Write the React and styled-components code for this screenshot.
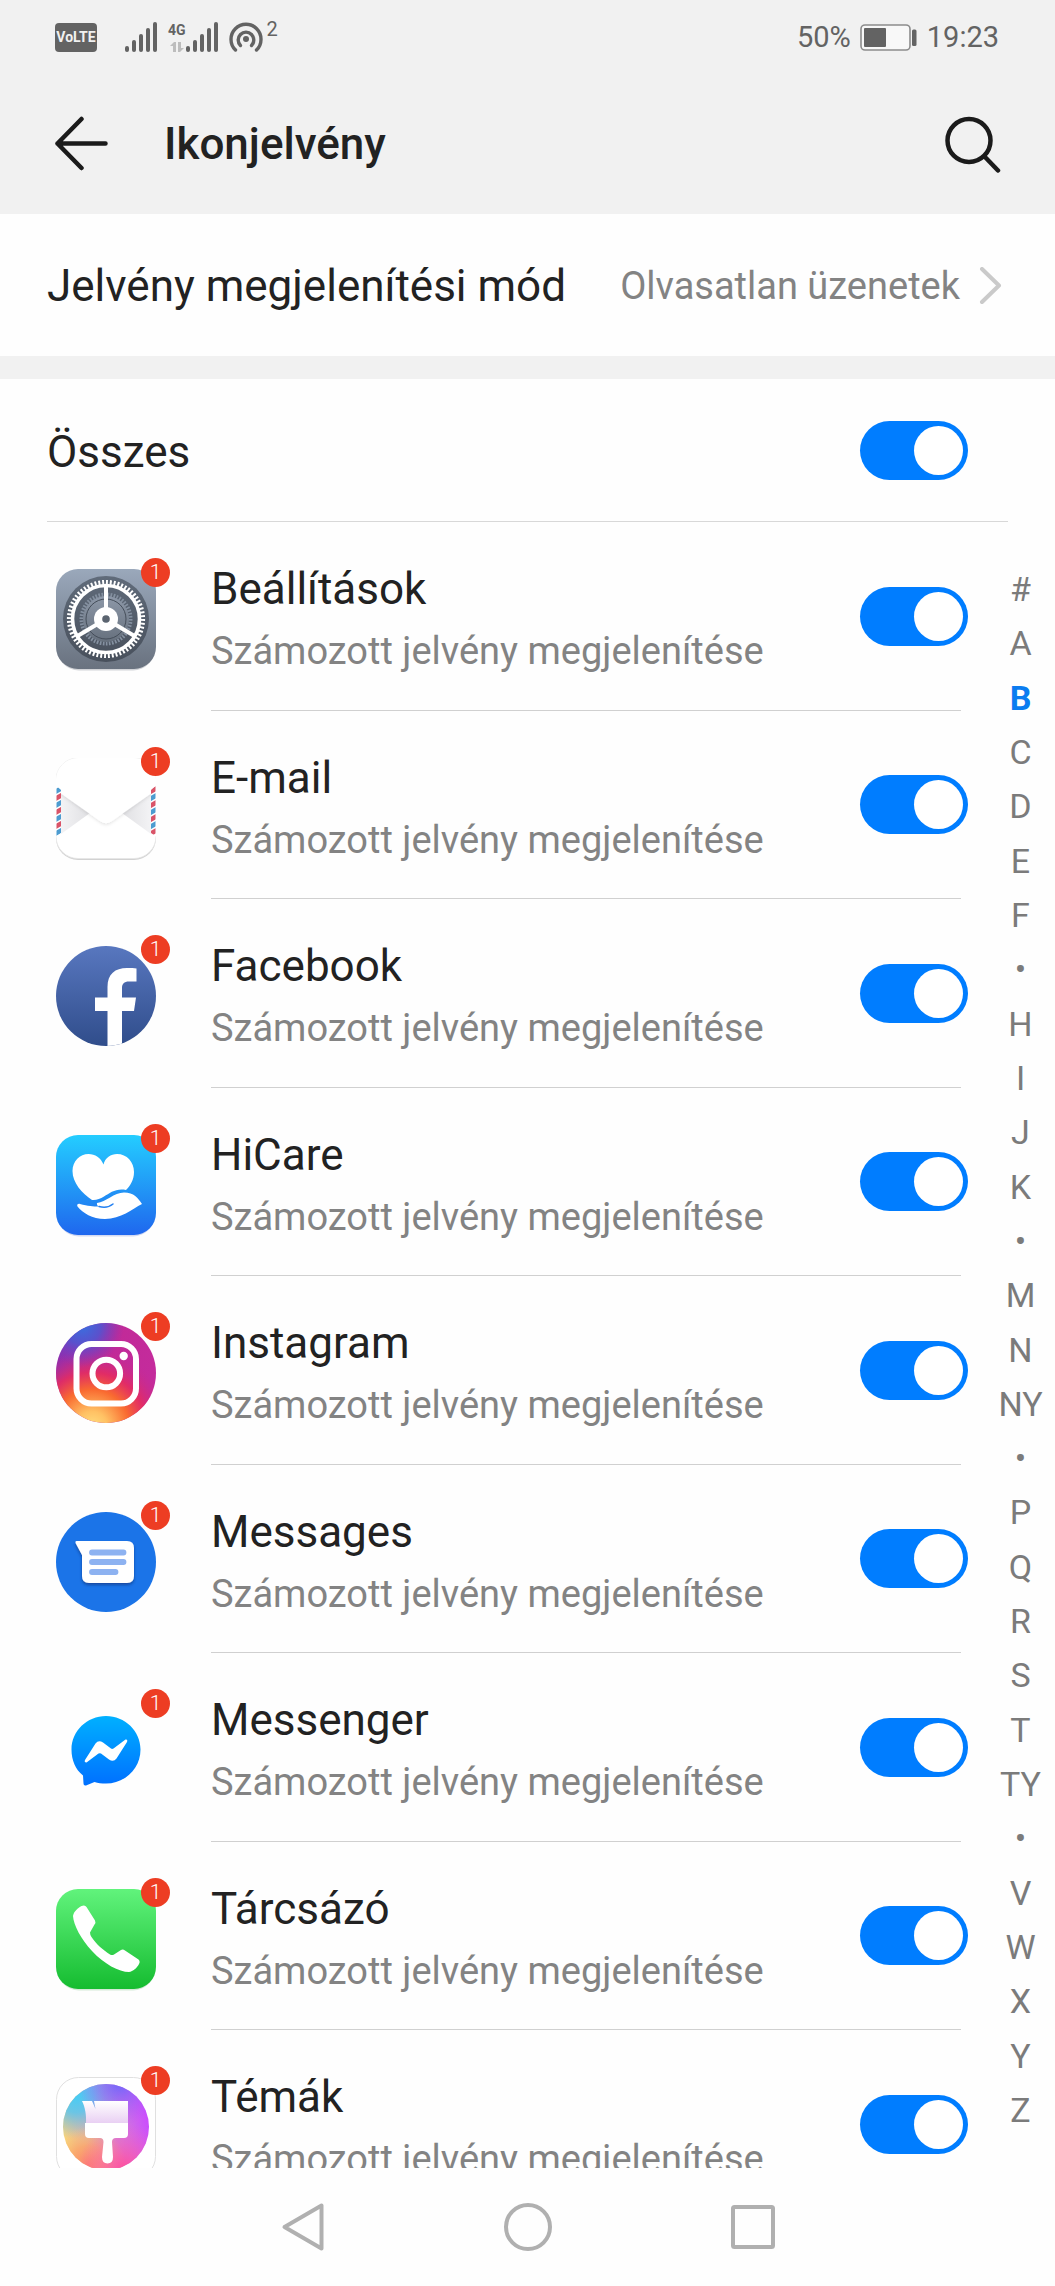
import React, { useState } from "react";
import styled, { createGlobalStyle } from "styled-components";

const GlobalStyle = createGlobalStyle`
  * { box-sizing: border-box; }
  body {
    margin: 0;
    background: #fefefe;
    color: #222;
    font-family: Roboto, "Noto Sans", sans-serif;
  }
  button { font: inherit; color: inherit; border: 0; padding: 0; background: none; cursor: pointer; }
`;

const Screen = styled.div`
  height: 100vh;
  display: flex;
  flex-direction: column;
  overflow: hidden;
`;

const Top = styled.header`
  flex: none;
  background: #f1f1f1;
`;

const StatusBar = styled.div`
  height: 74px;
  padding: 0 56px 0 55px;
  display: flex;
  justify-content: space-between;
  align-items: center;
  color: #636363;
`;

const StatusGroup = styled.div`
  display: flex;
  align-items: center;
  gap: ${(p) => p.$gap}px;
`;

const StatusText = styled.span`
  font-size: 29px;
  line-height: 40px;
`;

const VolteTag = styled.span`
  width: 42px;
  height: 29px;
  margin-right: 17px;
  border-radius: 4px;
  background: #636363;
  color: #f1f1f1;
  font-size: 14px;
  font-weight: 700;
  line-height: 29px;
  text-align: center;
`;

const NetworkType = styled.div`
  display: flex;
  flex-direction: column;
  align-items: center;
  gap: 4px;
  font-size: 14px;
  font-weight: 700;
  line-height: 16px;
`;

const Superscript = styled.span`
  align-self: flex-start;
  font-size: 20px;
  line-height: 14px;
`;

const AppBar = styled.div`
  height: 140px;
  padding: 0 53px;
  display: flex;
  align-items: center;
`;

const Title = styled.h1`
  flex: 1;
  margin: 0 0 0 55px;
  font-size: 44px;
  font-weight: 500;
  line-height: 56px;
`;

const IconButton = styled.button`
  display: flex;
`;

const ModeRow = styled.button`
  flex: none;
  height: 142px;
  padding: 2px 53px 0 47px;
  display: flex;
  align-items: center;
  justify-content: space-between;
  text-align: left;
`;

const Label = styled.label`
  font-size: 44px;
  line-height: 50px;
`;

const ModeValue = styled.span`
  display: flex;
  align-items: center;
  gap: 18px;
`;

const Secondary = styled.span`
  color: #838383;
  font-size: 38px;
  line-height: 46px;
`;

const Band = styled.div`
  flex: none;
  height: 23px;
  background: #f1f1f1;
`;

const AllRow = styled.div`
  flex: none;
  height: 143px;
  margin: 0 47px;
  padding-right: 40px;
  border-bottom: 1px solid #d8d8d8;
  display: flex;
  align-items: center;
  justify-content: space-between;

  ${Label} { padding-top: 4px; }
`;

const Switch = styled.input`
  appearance: none;
  flex: none;
  width: 108px;
  height: 59px;
  margin: 0;
  padding: 5px;
  border-radius: 30px;
  background: ${(p) => (p.checked ? "#007dff" : "#c8c8c8")};
  display: flex;
  justify-content: ${(p) => (p.checked ? "flex-end" : "flex-start")};
  cursor: pointer;

  &::before {
    content: "";
    width: 49px;
    height: 49px;
    border-radius: 50%;
    background: #fff;
  }
`;

const Content = styled.main`
  flex: 1;
  min-height: 0;
  display: flex;
  overflow: hidden;
`;

const AppList = styled.ul`
  flex: 1;
  margin: 0;
  padding: 0 0 0 56px;
  list-style: none;
`;

const AppRow = styled.li`
  height: 189px;
  display: flex;
  gap: 55px;

  &:nth-child(even) { height: 188px; }
`;

const IconBox = styled.div`
  position: relative;
  flex: none;
  width: 100px;
  height: 100px;
  margin-top: 47px;
`;

const Badge = styled.span`
  position: absolute;
  top: -11px;
  right: -14px;
  width: 29px;
  height: 29px;
  border-radius: 50%;
  background: #ed3d23;
  color: #fff;
  font-size: 21px;
  font-weight: 300;
  line-height: 29px;
  text-align: center;
`;

const RowBody = styled.div`
  flex: 1;
  margin-right: 7px;
  border-bottom: 1px solid #d0d0d0;
  display: flex;
  align-items: center;
  justify-content: space-between;

  ${Switch} { margin-right: -7px; }
`;

const Texts = styled.div`
  padding-top: 6px;
  display: flex;
  flex-direction: column;
  gap: 14px;
`;

const IndexBar = styled.nav`
  flex: none;
  width: 87px;
  padding: 40px 0 31px 18px;
  display: flex;
  flex-direction: column;
`;

const IndexLink = styled.a`
  flex: 1;
  display: flex;
  align-items: center;
  justify-content: center;
  color: ${(p) => (p.$active ? "#0a7cf0" : "#7b7b7b")};
  font-size: 34px;
  font-weight: ${(p) => (p.$active ? 700 : 400)};
  line-height: 40px;
  text-decoration: none;
`;

const NavBar = styled.footer`
  flex: none;
  height: 118px;
  display: flex;
  justify-content: center;
`;

const NavButton = styled.button`
  width: 225px;
  display: flex;
  align-items: center;
  justify-content: center;
`;

const Signal = () => (
  <svg width="32" height="30" viewBox="0 0 32 30" fill="#636363" aria-hidden="true">
    {[0, 1, 2, 3, 4].map((i) => (
      <rect key={i} x={i * 7} y={24 - i * 6} width="4" height={6 + i * 6} rx="2" />
    ))}
  </svg>
);

const DataArrows = () => (
  <svg width="14" height="10" viewBox="0 0 14 10" fill="#bdbdbd" aria-hidden="true">
    <path d="M0 4L4 0h2v10H3V4zM8 0h3v6h3l-4 4H8z" />
  </svg>
);

const Hotspot = () => (
  <svg width="34" height="30" viewBox="0 0 34 30" fill="none" stroke="#636363" strokeWidth="3.4" strokeLinecap="round" aria-hidden="true">
    <path d="M6.500 28A15 15 0 1 1 27.500 28" />
    <path d="M11.500 23.500A7.800 7.800 0 1 1 22.500 23.500" />
    <circle cx="17" cy="17" r="3" fill="#636363" stroke="none" />
  </svg>
);

const Battery = () => (
  <svg width="58" height="27" viewBox="0 0 58 27" aria-hidden="true">
    <rect x="1" y="1" width="49" height="25" rx="4" fill="#f8f8f8" stroke="#8c8c8c" strokeWidth="1.600" />
    <rect x="4" y="4" width="22" height="19" rx="1" fill="#636363" />
    <rect x="52" y="5.500" width="4.500" height="16.500" rx="1.500" fill="#636363" />
  </svg>
);

const BackArrow = () => (
  <svg width="56" height="56" viewBox="0 0 56 56" fill="none" stroke="#1b1b1b" strokeWidth="4.500" strokeLinecap="round" strokeLinejoin="round" aria-hidden="true">
    <path d="M52.500 27.500H4.500M28.500 3L4.500 27.500L28.500 52" />
  </svg>
);

const SearchIcon = () => (
  <svg width="57" height="57" viewBox="0 0 57 57" fill="none" stroke="#1b1b1b" strokeWidth="4.500" strokeLinecap="round" aria-hidden="true">
    <circle cx="24" cy="24.500" r="21.500" />
    <path d="M40 41L53 54.500" />
  </svg>
);

const Chevron = () => (
  <svg width="24" height="38" viewBox="0 0 24 38" fill="none" stroke="#cacaca" strokeWidth="4" strokeLinecap="round" strokeLinejoin="round" aria-hidden="true">
    <path d="M4 2L21 18.500L4 35" />
  </svg>
);

const IconSvg = ({ children }) => (
  <svg width="100" height="104" viewBox="0 0 100 104" aria-hidden="true">{children}</svg>
);

const Gradient = ({ id, from, to }) => (
  <linearGradient id={id} x1="0" y1="0" x2="0" y2="1">
    <stop offset="0" stopColor={from} />
    <stop offset="1" stopColor={to} />
  </linearGradient>
);

const SettingsIcon = () => (
  <IconSvg>
    <defs>
      <Gradient id="setBg" from="#9aa8bb" to="#69727f" />
      <Gradient id="setDial" from="#606b7a" to="#48505c" />
      <Gradient id="setDisc" from="#8d98a8" to="#66707d" />
    </defs>
    <rect x="1" y="3" width="98" height="98.500" rx="22" fill="#d2d4d8" />
    <rect width="100" height="100" rx="22" fill="url(#setBg)" />
    <circle cx="50" cy="50" r="43" fill="url(#setDial)" />
    <circle cx="50" cy="50" r="24.500" fill="none" stroke="#8490a0" strokeWidth="4" pathLength="100" strokeDasharray="1.100 0.900" />
    <circle cx="50" cy="50" r="23" fill="url(#setDisc)" />
    <circle cx="50" cy="50" r="20" fill="none" stroke="#454e5a" strokeWidth="1" />
    <circle cx="50" cy="50" r="33.500" fill="none" stroke="#fff" strokeWidth="3.600" />
    <circle cx="50" cy="50" r="36.700" fill="none" stroke="#fff" strokeWidth="4.800" pathLength="120" strokeDasharray="1 1" />
    <path d="M50 50V17M50 50L21.500 67M50 50L78.500 67" stroke="#fff" strokeWidth="4" />
    <circle cx="50" cy="50" r="12" fill="#fff" />
    <circle cx="50" cy="50" r="3.800" fill="#5b6470" />
  </IconSvg>
);

const EmailIcon = () => (
  <IconSvg>
    <defs>
      <linearGradient id="mailL" x1="0" x2="1"><stop offset="0" stopColor="#f3f3f5" /><stop offset="1" stopColor="#e0e0e3" /></linearGradient>
      <linearGradient id="mailR" x1="1" x2="0"><stop offset="0" stopColor="#f3f3f5" /><stop offset="1" stopColor="#e0e0e3" /></linearGradient>
      <clipPath id="mailStripes"><path d="M0.500 28L5 32V75L0.500 78ZM99.500 28L95 32V75L99.500 78Z" /></clipPath>
      <filter id="mailShade" x="-10%" y="-10%" width="120%" height="130%"><feDropShadow dx="0" dy="1.500" stdDeviation="1.500" floodColor="#000" floodOpacity="0.100" /></filter>
      <clipPath id="mailClip"><rect width="100" height="100.500" rx="22" /></clipPath>
    </defs>
    <rect x="0" y="1" width="100" height="101" rx="22" fill="#d2d2d2" />
    <rect x="0" y="0" width="100" height="100.500" rx="22" fill="#fff" stroke="#e6e6e6" strokeWidth="0.800" />
    <path d="M5 35L34 55L5 76Z" fill="url(#mailL)" />
    <path d="M95 35L66 55L95 76Z" fill="url(#mailR)" />
    <g clipPath="url(#mailClip)">
      <path d="M0 32V-8H100V32L56 63Q50 67.500 44 63Z" fill="#fff" filter="url(#mailShade)" />
    </g>
    <rect x="0" y="30" width="5" height="48" fill="#fff" />
    <rect x="95" y="30" width="5" height="48" fill="#fff" />
    <g clipPath="url(#mailStripes)" strokeWidth="4.500">
      {[0, 1, 2, 3, 4, 5, 6].map((i) => (
        <g key={i} stroke={i % 2 ? "#d95468" : "#4d9cd0"}>
          <path d={`M-1 ${34 + i * 7}L6 ${30 + i * 7}`} />
        </g>
      ))}
      {[0, 1, 2, 3, 4, 5, 6].map((i) => (
        <g key={i} stroke={i % 2 ? "#4d9cd0" : "#d95468"}>
          <path d={`M94 ${34 + i * 7}L101 ${30 + i * 7}`} />
        </g>
      ))}
    </g>
  </IconSvg>
);

const FacebookIcon = () => (
  <IconSvg>
    <defs>
      <Gradient id="fbBg" from="#5877bf" to="#304d8b" />
      <clipPath id="fbClip"><circle cx="50" cy="50" r="50" /></clipPath>
    </defs>
    <g clipPath="url(#fbClip)">
      <rect width="100" height="100" fill="url(#fbBg)" />
      <path d="M51.500 101V65H39V51.500H51.500V41C51.500 28 59 22 71 22C75 22 78 22 80.500 22.500V35.500H73C68 35.500 66 38 66 42V51.500H80L78 65H66V101Z" fill="#fff" />
    </g>
  </IconSvg>
);

const HiCareIcon = () => (
  <IconSvg>
    <defs><Gradient id="careBg" from="#24cdff" to="#1f67ee" /></defs>
    <rect x="1" y="3" width="98" height="98.500" rx="22" fill="#d3daf2" />
    <rect width="100" height="100" rx="22" fill="url(#careBg)" />
    <path d="M47.500 29.500C49 23 55 19 61 19C71 19 78 27 78 37C78 45 74 51 70 55C60 53 54 58 48 61.500C44 64 40 65.500 36 65C26 58 16.500 48 16.500 36C16.500 26 24 19 32.500 19C39 19 45 23 47.500 29.500Z" fill="#fff" />
    <path d="M41 68C50 67 58 57.500 68 57.500C78 57.500 82 63 86 69C76 74 65 84 49 84C36 84 27 78 21.500 71.500C20.500 69.500 22 68.500 24 69C32 71 37 71.500 43 71.500C41.500 71 40.500 69.500 41 68Z" fill="#fff" />
    <path d="M43 71.500C50 73.500 54 71.500 57 69" fill="none" stroke="#2481f2" strokeWidth="1.500" strokeLinecap="round" />
  </IconSvg>
);

const InstagramIcon = () => (
  <IconSvg>
    <defs>
      <linearGradient id="igBase" x1="0" y1="0" x2="1" y2="0.300"><stop offset="0" stopColor="#8030b5" /><stop offset="0.600" stopColor="#c12a98" /><stop offset="1" stopColor="#c42b9c" /></linearGradient>
      <radialGradient id="igBlue" gradientUnits="userSpaceOnUse" cx="26" cy="2" r="42"><stop offset="0" stopColor="#3771e0" /><stop offset="0.450" stopColor="#4c58d4" stopOpacity="0.850" /><stop offset="1" stopColor="#7a38c0" stopOpacity="0" /></radialGradient>
      <radialGradient id="igWarm" gradientUnits="userSpaceOnUse" cx="36" cy="104" r="78"><stop offset="0" stopColor="#ffdf80" /><stop offset="0.200" stopColor="#ffc164" /><stop offset="0.480" stopColor="#f96a30" /><stop offset="0.700" stopColor="#e52c60" stopOpacity="0.900" /><stop offset="1" stopColor="#c42b90" stopOpacity="0" /></radialGradient>
    </defs>
    <circle cx="50" cy="50" r="50" fill="url(#igBase)" />
    <circle cx="50" cy="50" r="50" fill="url(#igWarm)" />
    <circle cx="50" cy="50" r="50" fill="url(#igBlue)" />
    <g fill="none" stroke="#fff" strokeWidth="6">
      <rect x="20.500" y="21" width="59.500" height="59.500" rx="15" />
      <circle cx="50.300" cy="50.500" r="13.800" />
    </g>
    <circle cx="67.700" cy="33" r="4.200" fill="#fff" />
  </IconSvg>
);

const MessagesIcon = () => (
  <IconSvg>
    <defs>
      <filter id="msgShade" x="-20%" y="-20%" width="140%" height="150%"><feDropShadow dx="0" dy="2" stdDeviation="1.500" floodColor="#0a2c70" floodOpacity="0.600" /></filter>
    </defs>
    <circle cx="50" cy="50" r="50" fill="#1b74e8" />
    <path d="M20.500 29H71Q78 29 78 36V64Q78 71 71 71H33Q26 71 26 64V43L19.500 31Q19 29 20.500 29Z" fill="#fff" filter="url(#msgShade)" />
    <path d="M36 40.500H67.500M36 50H67.500M36 60H59.500" stroke="#8db2f1" strokeWidth="5.800" strokeLinecap="round" />
  </IconSvg>
);

const MessengerIcon = () => (
  <IconSvg>
    <defs><Gradient id="mgBg" from="#00b0ff" to="#0070ff" /></defs>
    <path d="M50 16C69 16 84.500 31 84.500 49.500C84.500 68.500 69 83.500 50 83.500C45.500 83.500 42 83 38.500 82L30 85.500Q27.500 86 27.500 83.500L27 75.500C19.500 69.500 15.500 60 15.500 49.500C15.500 31 31 16 50 16Z" fill="url(#mgBg)" />
    <path d="M29 60L39.500 43.500Q42.500 39.500 47 42.500L55 48.500Q56 49.300 57.500 48.500L69.500 39.500Q72 39 71 42L60.500 58.500Q57.500 62.500 53 59.500L45 53.500Q44 53 42.500 53.500L30.500 62.500Q28 62.500 29 60Z" fill="#fff" />
  </IconSvg>
);

const PhoneIcon = () => (
  <IconSvg>
    <defs><Gradient id="phBg" from="#61f37c" to="#15bc30" /></defs>
    <rect x="1" y="3" width="98" height="98.500" rx="22" fill="#d5ead8" />
    <rect width="100" height="100" rx="22" fill="url(#phBg)" />
    <path d="M25.500 17Q29 15.500 30.500 18L39 31.500Q40 33.500 38.500 35.500L34 43.500Q34 46 35.500 48C40 55 47 61 54 65.500Q56 66.500 58 65.500L65 61Q67 60 69 61.500L82.500 70.500Q84.500 72.500 83 75C81 79 77 82.500 73 83C63 83 48 75 36 62C25 50 17.500 36 17 27C18 22 22 19 25.500 17Z" fill="#fff" />
  </IconSvg>
);

const ThemesIcon = () => (
  <IconSvg>
    <defs>
      <linearGradient id="thBase" x1="0" y1="0.600" x2="1" y2="0.400"><stop offset="0" stopColor="#f9d77a" /><stop offset="0.450" stopColor="#d39cc4" /><stop offset="1" stopColor="#cb4bff" /></linearGradient>
      <radialGradient id="thCyan" gradientUnits="userSpaceOnUse" cx="20" cy="18" r="44"><stop offset="0" stopColor="#45cdf5" /><stop offset="0.400" stopColor="#55c6f2" stopOpacity="0.850" /><stop offset="1" stopColor="#6fb6ef" stopOpacity="0" /></radialGradient>
      <radialGradient id="thViolet" gradientUnits="userSpaceOnUse" cx="64" cy="6" r="42"><stop offset="0" stopColor="#6d68fa" /><stop offset="1" stopColor="#a05aff" stopOpacity="0" /></radialGradient>
      <radialGradient id="thPink" gradientUnits="userSpaceOnUse" cx="68" cy="92" r="46"><stop offset="0" stopColor="#ff4f9c" /><stop offset="1" stopColor="#fb58c8" stopOpacity="0" /></radialGradient>
      <radialGradient id="thOrange" gradientUnits="userSpaceOnUse" cx="32" cy="88" r="38"><stop offset="0" stopColor="#fc8268" /><stop offset="0.500" stopColor="#fca468" stopOpacity="0.800" /><stop offset="1" stopColor="#fbc070" stopOpacity="0" /></radialGradient>
      <linearGradient id="thBrush" x1="0" y1="0" x2="0" y2="1"><stop offset="0" stopColor="#fff" /><stop offset="1" stopColor="#e9d0f3" /></linearGradient>
    </defs>
    <rect x="0.500" y="0.500" width="99" height="101" rx="22" fill="#fff" stroke="#e0e0e0" />
    <circle cx="50" cy="50" r="43" fill="url(#thBase)" />
    <circle cx="50" cy="50" r="43" fill="url(#thCyan)" />
    <circle cx="50" cy="50" r="43" fill="url(#thViolet)" />
    <circle cx="50" cy="50" r="43" fill="url(#thOrange)" />
    <circle cx="50" cy="50" r="43" fill="url(#thPink)" />
    <path d="M26 24H36L39.500 32L38 24H72V46H30C30.500 38 29 30 26 24Z" fill="url(#thBrush)" />
    <path d="M29 46H72V57Q72 61 68 61H60Q56 61 56 65L57 80Q57 86.500 51.500 86.500Q46 86.500 46 80L47.500 65Q47.500 61 44 61H33Q29 61 29 57Z" fill="#fff" />
  </IconSvg>
);

const APPS = [
  { id: "settings", name: "Beállítások", Icon: SettingsIcon },
  { id: "email", name: "E-mail", Icon: EmailIcon },
  { id: "facebook", name: "Facebook", Icon: FacebookIcon },
  { id: "hicare", name: "HiCare", Icon: HiCareIcon },
  { id: "instagram", name: "Instagram", Icon: InstagramIcon },
  { id: "messages", name: "Messages", Icon: MessagesIcon },
  { id: "messenger", name: "Messenger", Icon: MessengerIcon },
  { id: "phone", name: "Tárcsázó", Icon: PhoneIcon },
  { id: "themes", name: "Témák", Icon: ThemesIcon },
];

const INDEX = "# A B C D E F • H I J K • M N NY • P Q R S T TY • V W X Y Z".split(" ");

export default function App() {
  const [enabled, setEnabled] = useState(() => Object.fromEntries(APPS.map((a) => [a.id, true])));
  const [active, setActive] = useState("B");
  const all = APPS.every((a) => enabled[a.id]);
  const toggleAll = () => setEnabled(Object.fromEntries(APPS.map((a) => [a.id, !all])));
  const toggle = (id) => setEnabled((s) => ({ ...s, [id]: !s[id] }));

  return (
    <Screen>
      <GlobalStyle />
      <Top>
        <StatusBar>
          <StatusGroup $gap={11}>
            <VolteTag>VoLTE</VolteTag>
            <Signal />
            <StatusGroup $gap={0}>
              <NetworkType>
                4G
                <DataArrows />
              </NetworkType>
              <Signal />
            </StatusGroup>
            <StatusGroup $gap={4}>
              <Hotspot />
              <Superscript>2</Superscript>
            </StatusGroup>
          </StatusGroup>
          <StatusGroup $gap={9}>
            <StatusText>50%</StatusText>
            <Battery />
            <StatusText>19:23</StatusText>
          </StatusGroup>
        </StatusBar>
        <AppBar>
          <IconButton type="button" aria-label="Vissza"><BackArrow /></IconButton>
          <Title>Ikonjelvény</Title>
          <IconButton type="button" aria-label="Keresés"><SearchIcon /></IconButton>
        </AppBar>
      </Top>
      <ModeRow type="button">
        <Label as="span">Jelvény megjelenítési mód</Label>
        <ModeValue>
          <Secondary>Olvasatlan üzenetek</Secondary>
          <Chevron />
        </ModeValue>
      </ModeRow>
      <Band />
      <AllRow>
        <Label htmlFor="all">Összes</Label>
        <Switch id="all" type="checkbox" role="switch" checked={all} onChange={toggleAll} />
      </AllRow>
      <Content>
        <AppList>
          {APPS.map(({ id, name, Icon }) => (
            <AppRow key={id}>
              <IconBox>
                <Icon />
                <Badge>1</Badge>
              </IconBox>
              <RowBody>
                <Texts>
                  <Label htmlFor={id}>{name}</Label>
                  <Secondary>Számozott jelvény megjelenítése</Secondary>
                </Texts>
                <Switch id={id} type="checkbox" role="switch" checked={enabled[id]} onChange={() => toggle(id)} />
              </RowBody>
            </AppRow>
          ))}
        </AppList>
        <IndexBar aria-label="Betűrendes mutató">
          {INDEX.map((letter, i) => (
            <IndexLink key={i} href="#" $active={letter === active} onClick={() => setActive(letter)}>
              {letter}
            </IndexLink>
          ))}
        </IndexBar>
      </Content>
      <NavBar>
        <NavButton type="button" aria-label="Vissza a rendszerben">
          <svg width="44" height="50" viewBox="0 0 44 50" fill="none" stroke="#b0b0b0" strokeWidth="4" strokeLinejoin="round" aria-hidden="true">
            <path d="M40.500 3.500V46.500L3.500 25Z" />
          </svg>
        </NavButton>
        <NavButton type="button" aria-label="Kezdőképernyő">
          <svg width="50" height="50" viewBox="0 0 50 50" fill="none" stroke="#b0b0b0" strokeWidth="4" aria-hidden="true">
            <circle cx="25" cy="25" r="22" />
          </svg>
        </NavButton>
        <NavButton type="button" aria-label="Legutóbbi alkalmazások">
          <svg width="44" height="44" viewBox="0 0 44 44" fill="none" stroke="#b0b0b0" strokeWidth="4" aria-hidden="true">
            <rect x="2" y="2" width="40" height="40" rx="1.500" />
          </svg>
        </NavButton>
      </NavBar>
    </Screen>
  );
}
